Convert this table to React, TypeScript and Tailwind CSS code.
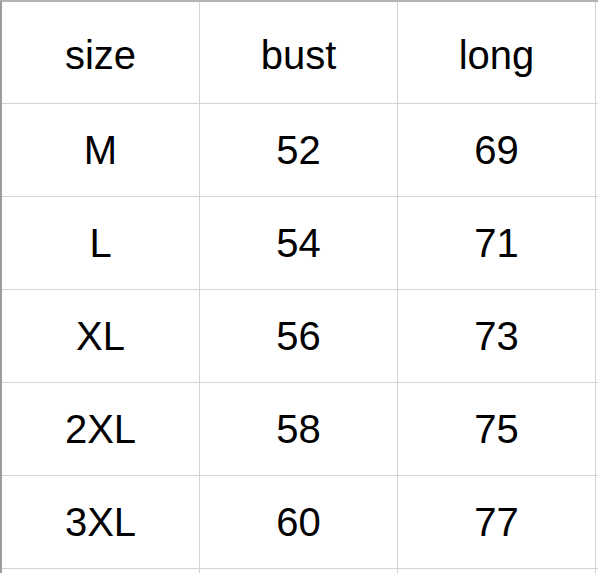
const HEADERS = ["size", "bust", "long"];

const ROWS = [
  ["M", "52", "69"],
  ["L", "54", "71"],
  ["XL", "56", "73"],
  ["2XL", "58", "75"],
  ["3XL", "60", "77"],
];

function Cell({ children, tall }: { children: string; tall?: boolean }) {
  return (
    <div
      className={`flex w-[198px] items-center justify-center border-r border-b border-[#d4d4d4] ${
        tall ? "h-[102px] pt-1" : "h-[93px]"
      }`}
    >
      {children}
    </div>
  );
}

export default function App() {
  return (
    <div
      className="h-[573px] w-[598px] overflow-hidden bg-white text-[40px] text-black"
      style={{ fontFamily: '"Liberation Sans", Arial, sans-serif' }}
    >
      <div className="border-t-2 border-l-2 border-t-[#b4b4b4] border-l-[#9c9c9c]">
        <div className="flex">
          {HEADERS.map((h) => (
            <Cell key={h} tall>
              {h}
            </Cell>
          ))}
          <div className="h-[102px] flex-1 border-b border-[#d4d4d4]" />
        </div>
        {ROWS.map((row) => (
          <div key={row[0]} className="flex">
            {row.map((v, i) => (
              <Cell key={i}>{v}</Cell>
            ))}
            <div className="h-[93px] flex-1 border-b border-[#d4d4d4]" />
          </div>
        ))}
        <div className="flex">
          {[0, 1, 2].map((i) => (
            <div key={i} className="h-[10px] w-[198px] border-r border-[#d4d4d4]" />
          ))}
        </div>
      </div>
    </div>
  );
}
